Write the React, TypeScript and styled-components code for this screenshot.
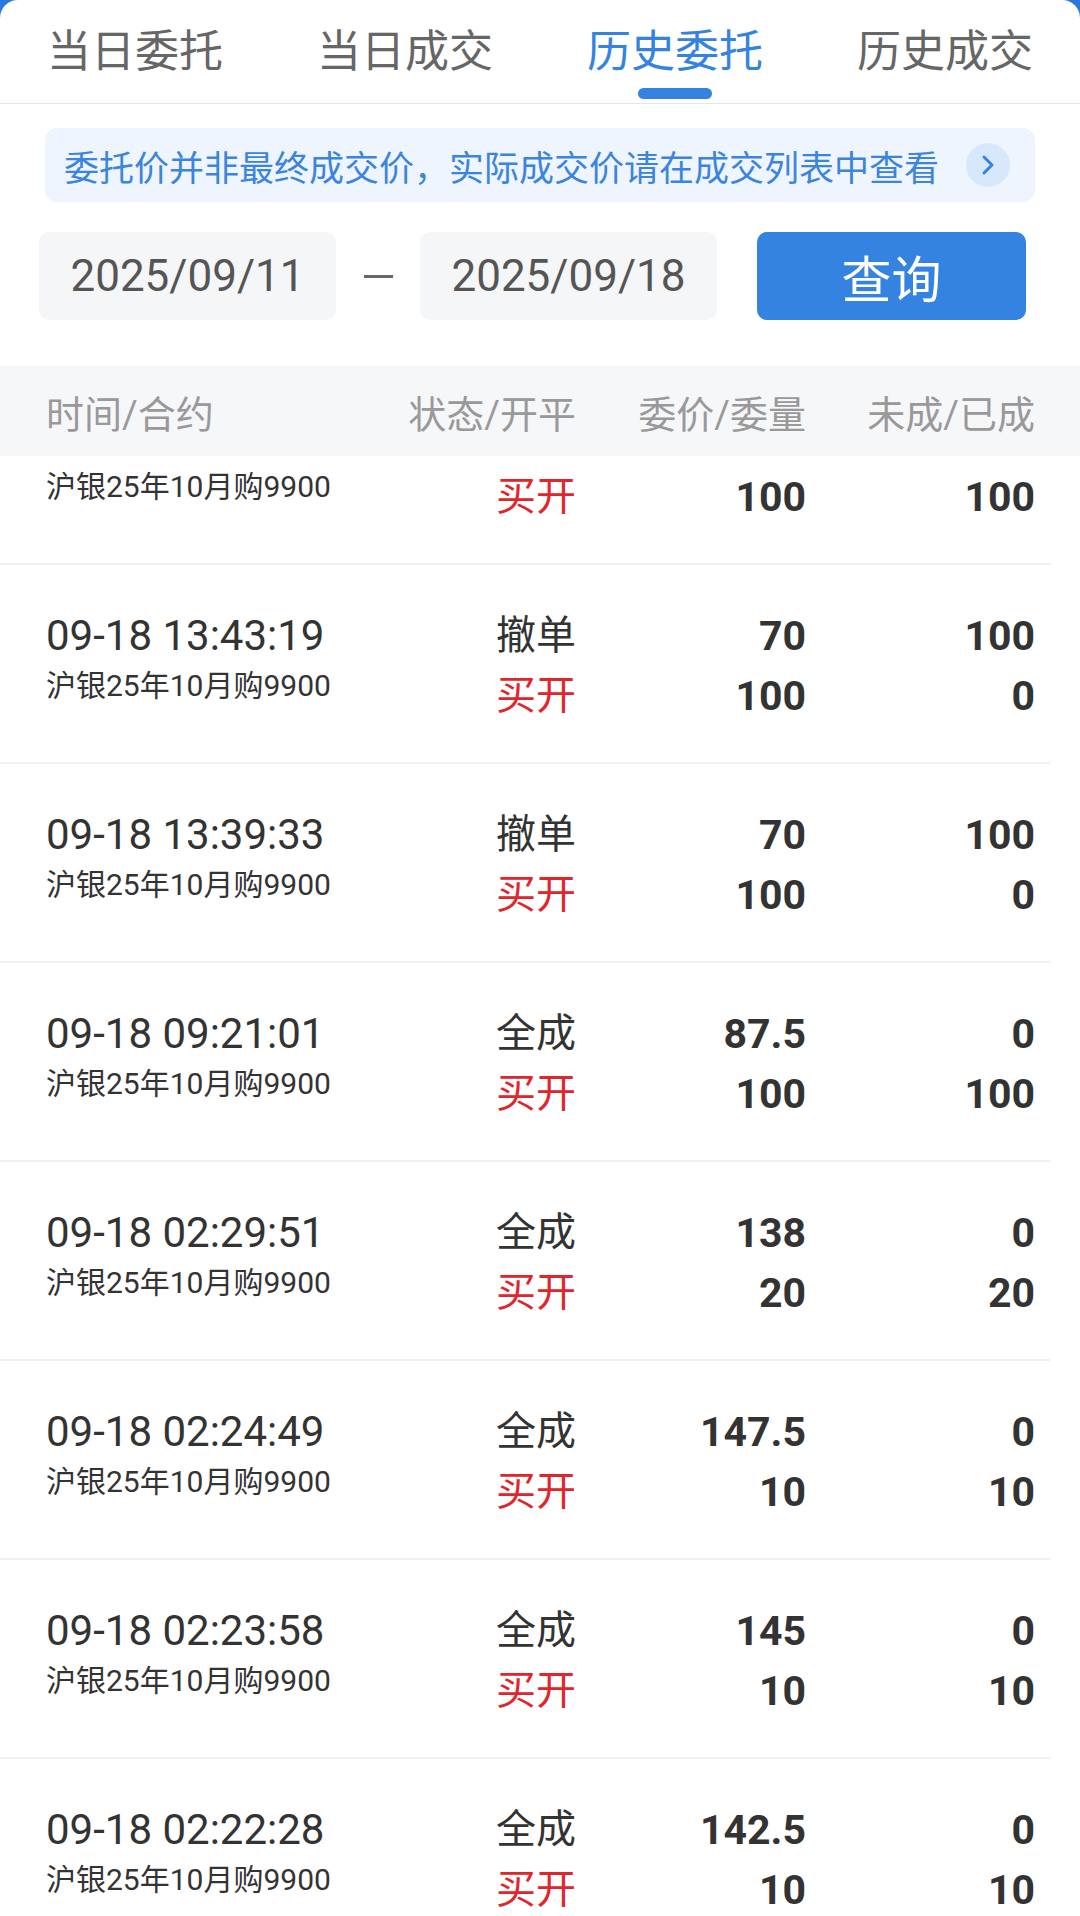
import React, { useLayoutEffect, useRef } from 'react';
import styled, { createGlobalStyle } from 'styled-components';

const GlobalStyle = createGlobalStyle`
  html, body {
    margin: 0;
    padding: 0;
    background: #2a78dc;
  }
  * { box-sizing: border-box; }
`;

const Screen = styled.div`
  width: 1080px;
  height: 1916px;
  background: #fff;
  border-radius: 18px 18px 0 0;
  overflow: hidden;
  display: flex;
  flex-direction: column;
  font-family: Roboto, "Noto Sans CJK SC", sans-serif;
`;

const TabBar = styled.div`
  display: flex;
  height: 104px;
  border-bottom: 1px solid #e6e6e6;
`;

const Tab = styled.div`
  flex: 1;
  display: flex;
  flex-direction: column;
  align-items: center;
  padding-top: 26px;
`;

const TabLabel = styled.div<{ active: boolean }>`
  font-size: 44px;
  line-height: 52px;
  color: ${p => (p.active ? '#3583e0' : '#666')};
`;

const TabIndicator = styled.div<{ active: boolean }>`
  margin-top: 10px;
  width: 74px;
  height: 11px;
  border-radius: 6px;
  background: ${p => (p.active ? '#3583e0' : 'transparent')};
`;

const Notice = styled.div`
  margin: 24px 45px 0 45px;
  height: 74px;
  border-radius: 12px;
  background: #eef5fe;
  display: flex;
  align-items: center;
  justify-content: space-between;
  padding: 0 25px 0 19px;
`;

const NoticeText = styled.div`
  font-size: 35px;
  color: #3c84dc;
  white-space: nowrap;
`;

const NoticeArrow = styled.div`
  width: 44px;
  height: 44px;
  border-radius: 50%;
  background: #d7e8fd;
  display: flex;
  align-items: center;
  justify-content: center;
`;

const DateRow = styled.div`
  display: flex;
  align-items: center;
  margin: 30px 54px 0 39px;
  height: 88px;
`;

const DateBox = styled.div`
  width: 297px;
  height: 88px;
  border-radius: 10px;
  background: #f5f6f8;
  display: flex;
  align-items: center;
  justify-content: center;
  font-size: 44px;
  color: #555;
`;

const DateDash = styled.div`
  width: 84px;
  display: flex;
  justify-content: center;
  &::before {
    content: '';
    width: 29px;
    height: 3px;
    background: #666;
  }
`;

const QueryButton = styled.button`
  margin-left: 40px;
  flex: 1;
  height: 88px;
  border: none;
  border-radius: 10px;
  background: #3583e0;
  color: #fff;
  font-family: inherit;
  font-size: 50px;
  padding: 0;
`;

const cols = '330px 200px 230px 229px';

const TableHead = styled.div`
  margin-top: 46px;
  height: 90px;
  background: #f6f7f9;
  display: grid;
  grid-template-columns: ${cols};
  align-items: center;
  padding-left: 46px;
`;

const HeadCell = styled.div<{ right?: boolean }>`
  font-size: 38px;
  color: #999;
  text-align: ${p => (p.right ? 'right' : 'left')};
`;

const List = styled.div`
  flex: 1;
  overflow-y: auto;
  scrollbar-width: none;
  &::-webkit-scrollbar { display: none; }
`;

const Row = styled.div`
  height: 199px;
  margin-right: 30px;
  border-bottom: 2px solid #f0f0f0;
  display: grid;
  grid-template-columns: ${cols};
  padding: 41px 0 0 46px;
`;

const Stack = styled.div<{ right?: boolean }>`
  display: flex;
  flex-direction: column;
  align-items: ${p => (p.right ? 'flex-end' : 'flex-start')};
`;

const Time = styled.div`
  font-size: 42px;
  line-height: 60px;
  color: #333;
`;

const Contract = styled.div`
  font-size: 30px;
  line-height: 40px;
  color: #333;
`;

const Status = styled.div<{ red?: boolean }>`
  font-size: 40px;
  line-height: 60px;
  color: ${p => (p.red ? '#e0262c' : '#333')};
`;

const Num = styled.div`
  font-size: 41px;
  line-height: 60px;
  font-weight: 700;
  color: #333;
`;

type Order = {
  time: string;
  status: string;
  price: string;
  qty: string;
  left: string;
  done: string;
};

const orders: Order[] = [
  { time: '09-18 13:51:06', status: '全成', price: '72.5', qty: '100', left: '0', done: '100' },
  { time: '09-18 13:43:19', status: '撤单', price: '70', qty: '100', left: '100', done: '0' },
  { time: '09-18 13:39:33', status: '撤单', price: '70', qty: '100', left: '100', done: '0' },
  { time: '09-18 09:21:01', status: '全成', price: '87.5', qty: '100', left: '0', done: '100' },
  { time: '09-18 02:29:51', status: '全成', price: '138', qty: '20', left: '0', done: '20' },
  { time: '09-18 02:24:49', status: '全成', price: '147.5', qty: '10', left: '0', done: '10' },
  { time: '09-18 02:23:58', status: '全成', price: '145', qty: '10', left: '0', done: '10' },
  { time: '09-18 02:22:28', status: '全成', price: '142.5', qty: '10', left: '0', done: '10' },
  { time: '09-18 02:20:12', status: '全成', price: '140', qty: '10', left: '0', done: '10' },
];

const tabs = ['当日委托', '当日成交', '历史委托', '历史成交'];

export default function App() {
  const listRef = useRef<HTMLDivElement>(null);

  // the list is scrolled a little, first row sits partly under the header
  useLayoutEffect(() => {
    if (listRef.current) listRef.current.scrollTop = 90;
  }, []);

  return (
    <>
      <GlobalStyle />
      <Screen>
        <TabBar>
          {tabs.map((t, i) => (
            <Tab key={t}>
              <TabLabel active={i === 2}>{t}</TabLabel>
              <TabIndicator active={i === 2} />
            </Tab>
          ))}
        </TabBar>

        <Notice>
          <NoticeText>委托价并非最终成交价，实际成交价请在成交列表中查看</NoticeText>
          <NoticeArrow>
            <svg width="14" height="22" viewBox="0 0 14 22">
              <polyline points="3,3 11,11 3,19" fill="none" stroke="#3583e0" strokeWidth="3" strokeLinecap="round" strokeLinejoin="round" />
            </svg>
          </NoticeArrow>
        </Notice>

        <DateRow>
          <DateBox>2025/09/11</DateBox>
          <DateDash />
          <DateBox>2025/09/18</DateBox>
          <QueryButton>查询</QueryButton>
        </DateRow>

        <TableHead>
          <HeadCell>时间/合约</HeadCell>
          <HeadCell right>状态/开平</HeadCell>
          <HeadCell right>委价/委量</HeadCell>
          <HeadCell right>未成/已成</HeadCell>
        </TableHead>

        <List ref={listRef}>
          {orders.map(o => (
            <Row key={o.time}>
              <Stack>
                <Time>{o.time}</Time>
                <Contract>沪银25年10月购9900</Contract>
              </Stack>
              <Stack right>
                <Status>{o.status}</Status>
                <Status red>买开</Status>
              </Stack>
              <Stack right>
                <Num>{o.price}</Num>
                <Num>{o.qty}</Num>
              </Stack>
              <Stack right>
                <Num>{o.left}</Num>
                <Num>{o.done}</Num>
              </Stack>
            </Row>
          ))}
        </List>
      </Screen>
    </>
  );
}
